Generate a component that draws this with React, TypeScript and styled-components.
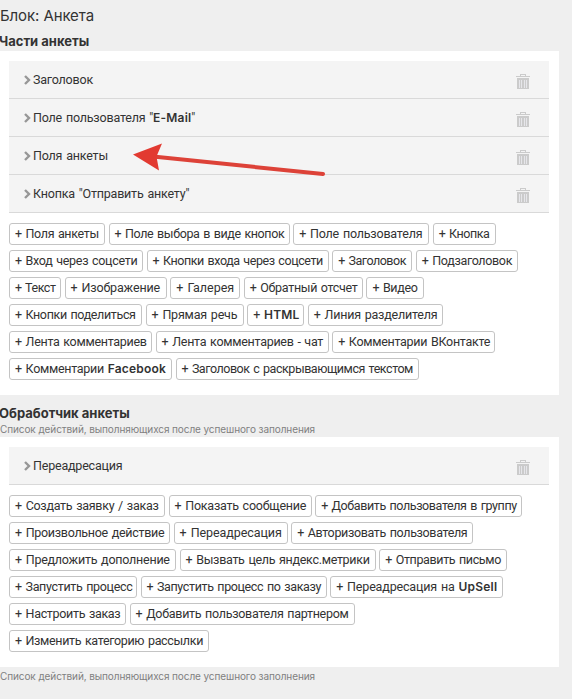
import { Fragment } from "react";
import styled, { createGlobalStyle } from "styled-components";

type ChipData = { label: string; width: number; tracking?: number };

const parts = ["Заголовок", 'Поле пользователя "*E-Mail*"', "Поля анкеты", 'Кнопка "Отправить анкету"'];

const partChips: ChipData[] = [
  { label: "Поля анкеты", width: 96, tracking: -0.35 },
  { label: "Поле выбора в виде кнопок", width: 181, tracking: -0.38 },
  { label: "Поле пользователя", width: 136, tracking: -0.2 },
  { label: "Кнопка", width: 63, tracking: -0.45 },
  { label: "Вход через соцсети", width: 134, tracking: -0.3 },
  { label: "Кнопки входа через соцсети", width: 182, tracking: -0.42 },
  { label: "Заголовок", width: 80, tracking: -0.47 },
  { label: "Подзаголовок", width: 102, tracking: -0.34 },
  { label: "Текст", width: 52, tracking: -0.45 },
  { label: "Изображение", width: 102, tracking: -0.15 },
  { label: "Галерея", width: 70, tracking: 0 },
  { label: "Обратный отсчет", width: 119, tracking: -0.32 },
  { label: "Видео", width: 58, tracking: -0.34 },
  { label: "Кнопки поделиться", width: 133, tracking: -0.36 },
  { label: "Прямая речь", width: 98, tracking: -0.2 },
  { label: "*HTML*", width: 57 },
  { label: "Линия разделителя", width: 135, tracking: -0.22 },
  { label: "Лента комментариев", width: 143, tracking: -0.3 },
  { label: "Лента комментариев - чат", width: 173, tracking: -0.28 },
  { label: "Комментарии ВКонтакте", width: 163, tracking: -0.29 },
  { label: "Комментарии *Facebook*", width: 163, tracking: -0.3 },
  { label: "Заголовок с раскрывающимся текстом", width: 243, tracking: -0.45 },
];

const handlerChips: ChipData[] = [
  { label: "Создать заявку / заказ", width: 156, tracking: -0.28 },
  { label: "Показать сообщение", width: 143, tracking: -0.25 },
  { label: "Добавить пользователя в группу", width: 207, tracking: -0.4 },
  { label: "Произвольное действие", width: 161, tracking: -0.29 },
  { label: "Переадресация", width: 114, tracking: -0.07 },
  { label: "Авторизовать пользователя", width: 182, tracking: -0.35 },
  { label: "Предложить дополнение", width: 167, tracking: -0.24 },
  { label: "Вызвать цель яндекс.метрики", width: 196, tracking: -0.3 },
  { label: "Отправить письмо", width: 128, tracking: -0.36 },
  { label: "Запустить процесс", width: 128, tracking: -0.33 },
  { label: "Запустить процесс по заказу", width: 186, tracking: -0.37 },
  { label: "Переадресация на *UpSell*", width: 173, tracking: -0.16 },
  { label: "Настроить заказ", width: 117, tracking: -0.32 },
  { label: "Добавить пользователя партнером", width: 225, tracking: -0.29 },
  { label: "Изменить категорию рассылки", width: 200, tracking: -0.34 },
];

// words between asterisks are set in the heavier latin face
const Label = ({ text }: { text: string }) => (
  <>
    {text.split("*").map((part, i) =>
      i % 2 ? <Latin key={i}>{part}</Latin> : <Fragment key={i}>{part}</Fragment>
    )}
  </>
);

const TrashIcon = () => (
  <svg width="14" height="16" viewBox="0 0 14 16" shapeRendering="crispEdges">
    <path d="M4 0h6v2H9V1H5v1H4zM0 2h14v1H0zM1 4h12v11H1z" fill="#cbcbcb" />
    <path d="M3 6h1v8H3zM5 6h1v8H5zM8 6h1v8H8zM10 6h1v8h-1z" fill="#e6e6ea" />
  </svg>
);

const Row = ({ title }: { title: string }) => (
  <RowBox>
    <svg width="7" height="10" viewBox="0 0 7 10" fill="none" stroke="#979797" strokeWidth="2.4">
      <path d="M1 1l4 4-4 4" />
    </svg>
    <RowTitle>
      <Label text={title} />
    </RowTitle>
    <TrashButton aria-label="Удалить">
      <TrashIcon />
    </TrashButton>
  </RowBox>
);

const Chips = ({ items }: { items: ChipData[] }) => (
  <ChipList>
    {items.map((chip) => (
      <Chip key={chip.label} $width={chip.width} $tracking={chip.tracking}>
        + <Label text={chip.label} />
      </Chip>
    ))}
  </ChipList>
);

const App = () => {
  return (
    <Page>
      <GlobalStyle />
      <Title>Блок: Анкета</Title>
      <SectionTitle>Части анкеты</SectionTitle>
      <Panel>
        {parts.map((part) => (
          <Row key={part} title={part} />
        ))}
        <Chips items={partChips} />
        <Arrow width="196" height="48" viewBox="0 0 196 48">
          <path d="M20 14.5L190 32" stroke="#dd4238" strokeWidth="4" strokeLinecap="round" />
          <path d="M0 12.5L29 1.5L23.5 14.5L26 28.5Z" fill="#e23a31" />
        </Arrow>
      </Panel>
      <SectionTitle $handler>Обработчик анкеты</SectionTitle>
      <Hint>Список действий, выполняющихся после успешного заполнения</Hint>
      <Panel>
        <Row title="Переадресация" />
        <Chips items={handlerChips} />
      </Panel>
      <Hint $bottom>Список действий, выполняющихся после успешного заполнения</Hint>
    </Page>
  );
};
export default App;


const GlobalStyle = createGlobalStyle`
  * {
    box-sizing: border-box;
  }
  body {
    margin: 0;
    background-color: #efefef;
    color: #333;
    font-family: Roboto, "Liberation Sans", sans-serif;
  }
`

const Page = styled.div`
  width: 572px;
  height: 699px;
  overflow: hidden;
`

const Title = styled.h1`
  margin: 0;
  height: 32px;
  line-height: 32px;
  font-family: Inter, sans-serif;
  font-size: 15px;
  font-weight: 400;
  letter-spacing: -0.1px;
`

const SectionTitle = styled.h2<{ $handler?: boolean }>`
  margin: ${(p) => (p.$handler ? "9px" : "0")} 0 0 -1px;
  height: ${(p) => (p.$handler ? "18px" : "19px")};
  line-height: 18px;
  font-family: Inter, sans-serif;
  font-size: 13px;
  font-weight: 700;
`

const Hint = styled.p<{ $bottom?: boolean }>`
  margin: 0;
  height: 15px;
  line-height: 15px;
  padding-top: ${(p) => (p.$bottom ? "2px" : "0")};
  font-family: Inter, sans-serif;
  font-size: 10px;
  letter-spacing: -0.09px;
  color: #808080;
`

const Panel = styled.section`
  position: relative;
  width: 559px;
  padding: 10px 10px 15px 9px;
  background-color: #fff;
`

const RowBox = styled.div`
  display: flex;
  align-items: center;
  width: 540px;
  height: 38px;
  padding: 0 19px 0 15px;
  background-color: #f4f4f4;
  border-bottom: 1px solid #d9d9d9;
`

const RowTitle = styled.span`
  flex: 1;
  padding-left: 2px;
  font-size: 12.5px;
  letter-spacing: -0.2px;
  word-spacing: 1px;
`

const TrashButton = styled.button`
  display: flex;
  margin: 4px 0 0;
  padding: 0;
  border: 0;
  background: none;
`

const ChipList = styled.div`
  display: flex;
  flex-wrap: wrap;
  gap: 5px 3.6px;
  width: 540px;
  margin-top: 10px;
`

const Chip = styled.button<{ $width: number; $tracking?: number }>`
  width: ${(p) => p.$width}px;
  height: 22px;
  padding: 0 0 0 5px;
  border: 1px solid #c4c4c4;
  border-radius: 3px;
  background-color: #fff;
  color: #333;
  font-family: inherit;
  font-size: 12.5px;
  line-height: 20px;
  letter-spacing: ${(p) => p.$tracking ?? -0.2}px;
  word-spacing: 1px;
  text-align: left;
  white-space: nowrap;
`

const Latin = styled.span`
  font-family: Inter, sans-serif;
  font-size: 12px;
  font-weight: 600;
  letter-spacing: 0.2px;
`

const Arrow = styled.svg`
  position: absolute;
  left: 133px;
  top: 91px;
`
